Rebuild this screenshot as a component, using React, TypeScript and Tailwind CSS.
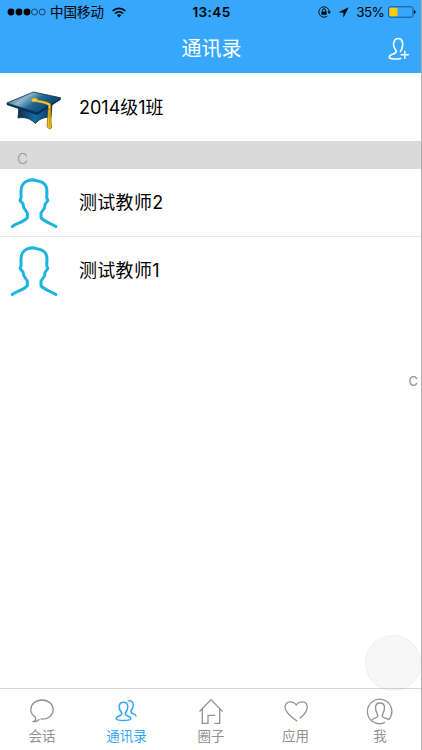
import { useState } from 'react'
import type { ReactNode } from 'react'
import { clsx } from 'clsx'

const contacts = ['测试教师2', '测试教师1']

function ChatIcon() {
  return (
    <path d="M7.3 20.2C4.3 18.3 2.8 15.7 2.8 12.6 2.8 7.2 7.6 3 14 3S25.2 7.2 25.2 12.6 20.4 22.2 14 22.2H12.5M7.3 20.2C8.2 22.2 7.4 23.6 5.6 24.6 8.2 25 10.3 24 11.3 22" />
  )
}

function PeopleIcon() {
  return (
    <g strokeWidth="1.5">
      <path d="M8.9 16.2C6.9 14 6 11.3 6.3 8.9 6.6 6.4 8.3 5.3 10.5 5.3S14.4 6.4 14.8 8.9C15.1 11.3 14.1 14 12.3 16.2 12 18 13.2 18.6 15.3 19.3 17.4 20 18 21 17.7 22.1 17.2 23.8 3.8 23.8 3.3 22.1 3 21 3.6 20 5.6 19.3 7.7 18.6 9.1 18 8.9 16.2Z" />
      <path d="M15 3.9C17.7 3.1 19.9 4.6 20.2 7.4 20.5 10 19.6 11.9 18 13.8 17.7 15.6 18.6 16.2 20.3 16.8 22.2 17.4 22.9 18 23.2 19.4" />
    </g>
  )
}

function HouseIcon() {
  return <path d="M2.5 14.5 14 2.6 25.5 14.5M5.3 11.8V26.4H11V18.3H18.3M22.7 11.8V26.4H17.5" />
}

function HeartIcon() {
  return (
    <path d="M15.2 24.2C9.5 20.3 3 15.4 3 10.3 3 6.8 5.4 4.8 8.2 4.8 10.8 4.8 12.8 5.7 14.2 8 15.6 5.7 17.6 4.8 20.2 4.8 23 4.8 25.2 6.8 25.2 10.3 25.2 14.4 21.8 18.2 17.8 21.3" />
  )
}

function MeIcon() {
  return (
    <>
      <path d="M19 25.4A12.2 12.2 0 1 1 22.6 22.7" />
      <path d="M5.8 22.8C7.3 20.9 11.6 21.1 11.9 19.2 12.1 17.3 9.5 15.3 9.5 10.7 9.5 7.8 11.3 6 14 6S18.5 7.8 18.5 10.7C18.5 15.3 15.9 17.3 16.1 19.2 16.4 21.1 20.7 20.9 22.6 22.7" />
    </>
  )
}

const tabs: { label: string; icon: ReactNode }[] = [
  { label: '会话', icon: <ChatIcon /> },
  { label: '通讯录', icon: <PeopleIcon /> },
  { label: '圈子', icon: <HouseIcon /> },
  { label: '应用', icon: <HeartIcon /> },
  { label: '我', icon: <MeIcon /> },
]

function StatusBar() {
  return (
    <div className="grid h-6 grid-cols-[1fr_auto_1fr] items-center pl-[7px] pr-[5px] text-black">
      <div className="flex items-center">
        <svg width="40" height="10" viewBox="0 0 40 10">
          <g>
            <circle cx="4" cy="5" r="3.4" />
            <circle cx="12" cy="5" r="3.4" />
            <circle cx="20" cy="5" r="3.4" />
          </g>
          <g fill="none" stroke="currentColor" strokeWidth=".6">
            <circle cx="27.5" cy="5" r="3" />
            <circle cx="35.2" cy="5" r="3" />
          </g>
        </svg>
        <span className="ml-[3px] mt-0.5 text-[13.5px] leading-none">中国移动</span>
        <svg className="ml-2" width="14" height="11" viewBox="0 0 14 11">
          <g fill="none" stroke="currentColor" strokeWidth="1.7">
            <path d="M.7 4C4.2.5 9.8.5 13.3 4" />
            <path d="M3 6.5C5.3 4.2 8.7 4.2 11 6.5" />
          </g>
          <path d="M4.8 8.2C6 7 8 7 9.2 8.2L7 10.6Z" />
        </svg>
      </div>
      <span className="mt-px text-[13.5px] font-semibold leading-none tracking-[.4px]">13:45</span>
      <div className="flex items-center justify-end">
        <svg width="13" height="12" viewBox="0 0 13 12">
          <path d="M11.2 6A5.2 5.2 0 1 0 9.2 10.1" fill="none" stroke="currentColor" strokeWidth=".9" />
          <path d="M9.4 5.6H13L11.2 8ZM3.4 5.4H8.6V8.8H3.4Z" />
          <path d="M4.5 5.6V4.2C4.5 2.3 7.5 2.3 7.5 4.2V5.6" fill="none" stroke="currentColor" />
        </svg>
        <svg className="ml-[7px]" width="11" height="11" viewBox="0 0 11 11">
          <path d="M10.7.3.3 5.5H5.4V10.7Z" />
        </svg>
        <span className="ml-[7px] mt-px text-[13.5px] leading-none tracking-[-.7px]">35%</span>
        <svg className="ml-1" width="28" height="12" viewBox="0 0 28 12">
          <rect x=".5" y=".8" width="24.5" height="10.4" rx="1.8" fill="none" stroke="#174d7a" strokeWidth=".9" />
          <rect x="1.5" y="1.8" width="8" height="8.4" rx=".6" fill="#ffcc0a" />
          <path d="M26 4.2C28 4.5 28 7.5 26 7.8Z" />
        </svg>
      </div>
    </div>
  )
}

function GraduationCap() {
  return (
    <svg width="56" height="40" viewBox="0 0 56 40">
      <defs>
        <linearGradient id="board" x1="0" y1="0" x2="1" y2=".5">
          <stop offset="0" stopColor="#0c4a78" />
          <stop offset=".38" stopColor="#8fb6cc" />
          <stop offset=".62" stopColor="#1f6795" />
          <stop offset="1" stopColor="#073d69" />
        </linearGradient>
        <linearGradient id="cap" x1="0" y1="0" x2="1" y2="0">
          <stop offset="0" stopColor="#082c4c" />
          <stop offset=".5" stopColor="#176ca5" />
          <stop offset="1" stopColor="#06375f" />
        </linearGradient>
      </defs>
      <path d="M13 15 12 27C19 25.5 25 28 29.5 32.5 33 28 39 25.5 45 26.5L46 12Z" fill="url(#cap)" stroke="#08243c" strokeWidth=".8" />
      <path d="M.8 12 31 21.8 54.7 6.8V8.7L31 24 .8 14Z" fill="#062f50" />
      <path d="M.8 12 27.5 1 54.7 6.8 31 21.8Z" fill="url(#board)" stroke="#092e4c" strokeWidth=".8" />
      <path d="M29 9.3C34 11 39 10.5 43.5 13.5V27" fill="none" stroke="#94710c" strokeWidth="2.8" />
      <path d="M29 9.3C34 11 39 10.5 43.5 13.5V27" fill="none" stroke="#f5ca35" strokeWidth="1.9" />
      <ellipse cx="28.5" cy="9" rx="3.2" ry="2" fill="#f3cc43" stroke="#a98216" strokeWidth=".5" />
      <path d="M42.3 18H44.6L45.5 37 44 38.2 41 36Z" fill="#f4c51d" stroke="#806111" strokeWidth=".7" />
      <path d="M43.6 22 43.5 36" stroke="#a37d0e" strokeWidth=".6" />
    </svg>
  )
}

function Avatar() {
  return (
    <svg width="48" height="52" viewBox="0 0 48 52" fill="none" stroke="#1fb3df" strokeWidth="3" strokeLinecap="round" strokeLinejoin="round">
      <path d="M2.3 49.5C7 46 14 45 17.3 40.8V36L13.7 30.5 13 27 10 23.5 11.2 20C10.5 12 11 6.2 18 3.7 23.5 1.5 27 3.5 32.5 5.5 38 8.5 37 14.5 36.7 20.5L37.8 23.5 35 27.5 34.5 31 31 36V40.8C34.3 45 41 46 45.8 49.5" />
    </svg>
  )
}

function AddContactIcon() {
  return (
    <svg width="24" height="26" viewBox="0 0 24 26" fill="none" stroke="white" strokeWidth="1.6" strokeLinecap="round" strokeLinejoin="round">
      <path d="M14.4 15.6C16.7 11.6 17.2 8.2 16.2 5.4 14.9 1.5 9.5 1.5 8.1 5.4 7 8.5 8 11.8 9.9 14.2 11.1 15.9 9.5 17 7.2 17.9 4.3 19 2.8 20.3 3.4 21.7 4.2 23.3 10.5 23.4 14.8 22.5M15.3 18.8H22.3M18.8 15.3V22.3" />
    </svg>
  )
}

export default function App() {
  const [active, setActive] = useState(1)

  return (
    <div className="relative flex h-[750px] w-[422px] flex-col overflow-hidden border-r border-[#b0b0b0] bg-white font-[Inter,'Noto_Sans_CJK_SC',sans-serif] text-black">
      <header className="h-[73px] shrink-0 bg-[#37a7fd]">
        <StatusBar />
        <div className="grid h-12 grid-cols-[1fr_auto_1fr] items-center pr-[11px]">
          <h1 className="col-start-2 ml-[13px] mt-px text-[20px] leading-none text-white">通讯录</h1>
          <button className="justify-self-end pt-0.5" aria-label="添加">
            <AddContactIcon />
          </button>
        </div>
      </header>

      <main className="relative flex-1">
        <div className="flex h-[68px] items-center pl-1.5">
          <div className="mt-2 w-[73px]">
            <GraduationCap />
          </div>
          <span className="text-[18px]">2014级1班</span>
        </div>
        <div className="flex h-7 items-center bg-[#dadada] pl-[17px] pt-1.5 text-[15px] font-light leading-none text-[#999]">C</div>
        {contacts.map(name => (
          <div key={name} className="flex h-[68px] items-center border-b border-[#e6eaec] pl-[10px] last-of-type:h-[67px] last-of-type:border-0">
            <div className="w-[69px]">
              <Avatar />
            </div>
            <span className="text-[18px] tracking-[.3px]">{name}</span>
          </div>
        ))}
        <span className="absolute right-[3px] top-[300px] text-[13px] font-medium leading-4 text-[#999]">C</span>
      </main>

      <nav className="-mr-px grid h-[62px] shrink-0 grid-cols-[84px_85px_84px_85px_84px] border-t border-[#d5d5d5]">
        {tabs.map(({ label, icon }, i) => (
          <button
            key={label}
            onClick={() => setActive(i)}
            className={clsx('flex flex-col items-center pt-2', active === i ? 'text-[#36a5f5]' : 'text-[#929292]')}
          >
            <svg width="28" height="28" viewBox="0 0 28 28" fill="none" stroke="currentColor" strokeWidth="1.3">
              {icon}
            </svg>
            <span className="mt-1 text-[13.5px] leading-[15px]">{label}</span>
          </button>
        ))}
      </nav>

      {/* AssistiveTouch */}
      <div className="absolute bottom-[59px] right-0 size-14 rounded-full border border-black/[0.04] bg-black/[0.03]" />
    </div>
  )
}
